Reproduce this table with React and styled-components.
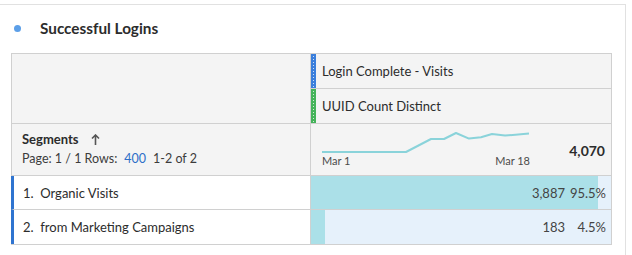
import React from "react";
import styled, { createGlobalStyle } from "styled-components";

const Global = createGlobalStyle`
  html, body { margin: 0; padding: 0; background: #fff; }
  body { font-family: Lato, "Noto Sans", sans-serif; color: #2c2c2c; }
`;

const Panel = styled.div`
  margin-top: 4px;
  margin-left: -1px;
  width: 627px;
  height: 251px;
  border-top: 1px solid #e1e1e1;
  border-right: 1px solid #e1e1e1;
  box-sizing: border-box;
`;

const TitleBar = styled.div`
  display: flex;
  align-items: center;
  height: 48px;
  padding-left: 15px;
  box-sizing: border-box;
`;

const Dot = styled.span`
  width: 7px;
  height: 7px;
  border-radius: 50%;
  background: #5c9fe8;
  margin-right: 19px;
  margin-top: -2px;
`;

const Title = styled.h2`
  margin: 0;
  font-size: 15.3px;
  font-weight: 700;
  color: #2c2c2c;
  margin-top: -2px;
`;

const Table = styled.div`
  margin-left: 12px;
  width: 601px;
  border: 1px solid #d0d0d0;
  display: grid;
  grid-template-columns: 299px 300px;
  box-sizing: border-box;
`;

const HeadLeft = styled.div`
  grid-row: span 2;
  background: #f4f4f4;
  border-right: 1px solid #d0d0d0;
  border-bottom: 1px solid #d0d0d0;
`;

const MetricCell = styled.div`
  background: #f4f4f4;
  height: 35px;
  box-sizing: border-box;
  border-bottom: 1px solid #d0d0d0;
  display: flex;
  align-items: center;
  font-size: 13px;
  color: #2c2c2c;
`;

const Handle = styled.span`
  flex: 0 0 5px;
  align-self: stretch;
  margin-right: 6px;
  background-color: ${(p) => p.$color};
  background-image: linear-gradient(rgba(255, 255, 255, 0.75) 1px, transparent 1px);
  background-size: 1px 3px;
  background-repeat: repeat-y;
  background-position: 2px 2px;
`;

const SegLeft = styled.div`
  background: #f4f4f4;
  border-right: 1px solid #d0d0d0;
  border-bottom: 1px solid #d0d0d0;
  height: 52px;
  box-sizing: border-box;
  padding: 7px 0 0 10px;
`;

const SegTitle = styled.div`
  display: flex;
  align-items: center;
  gap: 12px;
  font-size: 13px;
  font-weight: 700;
  height: 16px;
`;

const PageInfo = styled.div`
  display: flex;
  gap: 7px;
  margin-top: 4px;
  font-size: 12.5px;
  color: #3c3c3c;
`;

const RowsLink = styled.span`
  color: #2d6fc8;
`;

const SegRight = styled.div`
  background: #f4f4f4;
  border-bottom: 1px solid #d0d0d0;
  height: 52px;
  box-sizing: border-box;
  display: flex;
  align-items: flex-start;
  padding: 6px 6px 0 11px;
`;

const Spark = styled.div`
  display: flex;
  flex-direction: column;
  width: 208px;
`;

const Dates = styled.div`
  display: flex;
  justify-content: space-between;
  font-size: 11px;
  color: #4b4b4b;
`;

const Total = styled.div`
  margin-left: auto;
  margin-top: 12px;
  font-size: 14px;
  font-weight: 700;
  color: #2c2c2c;
`;

const RowLabel = styled.div`
  height: 34px;
  box-sizing: border-box;
  border-right: 1px solid #d0d0d0;
  border-bottom: ${(p) => (p.$last ? "none" : "1px solid #d0d0d0")};
  border-left: 3px solid #2f74d0;
  margin-left: -1px;
  display: flex;
  align-items: center;
  padding-left: 9px;
  font-size: 13px;
  color: #2c2c2c;
  white-space: pre;
`;

const RowValue = styled.div`
  height: 34px;
  box-sizing: border-box;
  border-bottom: ${(p) => (p.$last ? "none" : "1px solid #d0d0d0")};
  position: relative;
  background: #e6f1fb;
  display: flex;
  align-items: center;
  justify-content: flex-end;
  padding-right: 5px;
  font-size: 13px;
  color: #444;
`;

const Fill = styled.div`
  position: absolute;
  left: 0;
  top: 0;
  bottom: 0;
  background: #abe0e8;
`;

const Num = styled.span`
  position: relative;
`;

const Pct = styled.span`
  position: relative;
  width: 41px;
  text-align: right;
`;

const pts = [
  [0, 22],
  [84, 22],
  [109, 9],
  [122, 9],
  [134, 3],
  [147, 8.6],
  [159, 7.3],
  [170, 4],
  [183, 5.6],
  [207, 3.6],
];

const rows = [
  { label: "1.  Organic Visits", num: "3,887", pct: "95.5%", share: 0.955 },
  { label: "2.  from Marketing Campaigns", num: "183", pct: "4.5%", share: 0.045 },
];

export default function App() {
  return (
    <>
      <Global />
      <Panel>
        <TitleBar>
          <Dot />
          <Title>Successful Logins</Title>
        </TitleBar>
        <Table>
          <HeadLeft />
          <MetricCell>
            <Handle $color="#3b7fdc" />
            Login Complete - Visits
          </MetricCell>
          <MetricCell>
            <Handle $color="#45b35a" />
            UUID Count Distinct
          </MetricCell>
          <SegLeft>
            <SegTitle>
              Segments
              <svg width="9" height="11" viewBox="0 0 9 11">
                <path d="M4.5 1v10M1 4.5L4.5 1 8 4.5" stroke="#555" strokeWidth="1.6" fill="none" />
              </svg>
            </SegTitle>
            <PageInfo>
              <span>Page: 1 / 1 Rows:</span>
              <RowsLink>400</RowsLink>
              <span>1-2 of 2</span>
            </PageInfo>
          </SegLeft>
          <SegRight>
            <Spark>
              <svg width="208" height="24" viewBox="0 0 208 24">
                <polyline
                  points={pts.map((p) => p.join(",")).join(" ")}
                  fill="none"
                  stroke="#8ad3da"
                  strokeWidth="2"
                  strokeLinejoin="round"
                />
              </svg>
              <Dates>
                <span>Mar 1</span>
                <span>Mar 18</span>
              </Dates>
            </Spark>
            <Total>4,070</Total>
          </SegRight>
          {rows.map((r, i) => (
            <React.Fragment key={r.label}>
              <RowLabel $last={i === rows.length - 1}>{r.label}</RowLabel>
              <RowValue $last={i === rows.length - 1}>
                <Fill style={{ width: `${r.share * 100}%` }} />
                <Num>{r.num}</Num>
                <Pct>{r.pct}</Pct>
              </RowValue>
            </React.Fragment>
          ))}
        </Table>
      </Panel>
    </>
  );
}
